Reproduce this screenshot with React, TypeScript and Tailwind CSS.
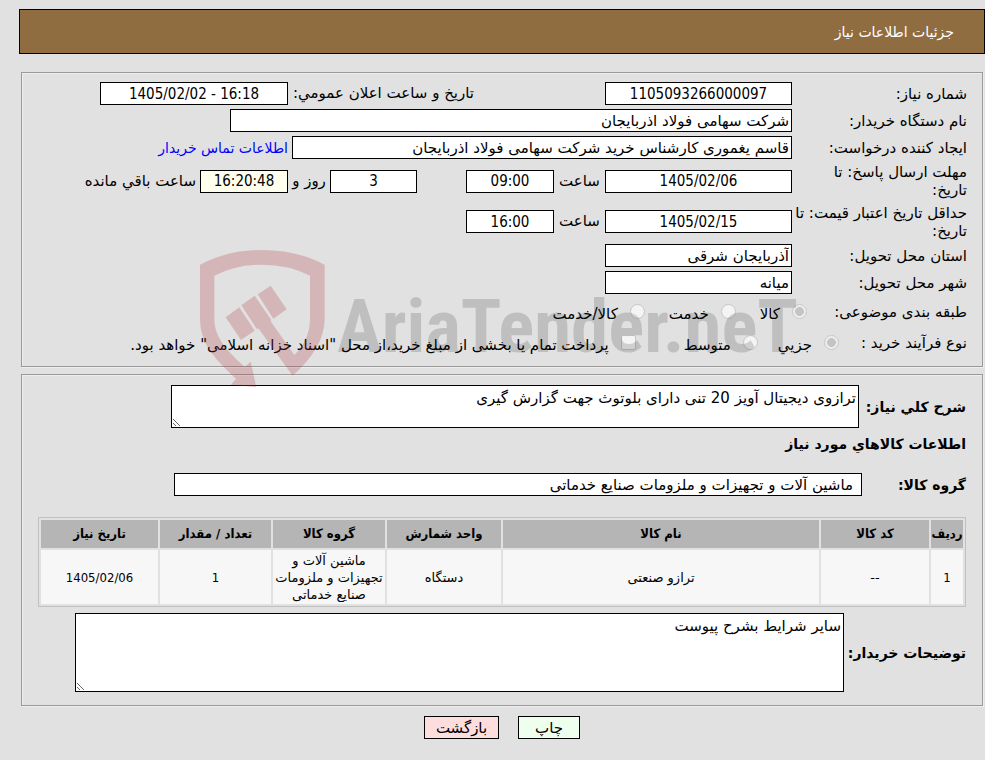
import type { InputHTMLAttributes, ReactNode } from "react";
import { clsx } from "clsx";

const columns = [
  { title: "ردیف", width: "w-8", value: "1" },
  { title: "کد کالا", width: "w-[108px]", value: "--" },
  { title: "نام کالا", width: "", value: "ترازو صنعتی" },
  { title: "واحد شمارش", width: "w-[114px]", value: "دستگاه" },
  { title: "گروه کالا", width: "w-28", value: "ماشین آلات و تجهیزات و ملزومات صنایع خدماتی" },
  { title: "تعداد / مقدار", width: "w-[111px]", value: "1" },
  { title: "تاریخ نیاز", width: "w-[117px]", value: "1405/02/06" },
];

const condensed = "font-['DejaVu_Sans_Condensed','DejaVu_Sans',sans-serif]";

function Box({
  className,
  numeric = false,
  tint = "bg-white",
  ...props
}: InputHTMLAttributes<HTMLInputElement> & { numeric?: boolean; tint?: string }) {
  return (
    <input
      readOnly
      className={clsx(
        "h-[23px] shrink-0 border border-black outline-none",
        tint,
        numeric && ["text-center", condensed],
        className
      )}
      {...props}
    />
  );
}

function Panel({ children, className }: { children: ReactNode; className?: string }) {
  return (
    <fieldset className={clsx("min-w-0 border border-[#9a9a9a] shadow-[1px_1px_0_#eeeeee,inset_1px_1px_0_#eeeeee]", className)}>
      {children}
    </fieldset>
  );
}

function Row({
  id,
  label,
  height = "h-[27px]",
  children,
}: {
  id: string;
  label: ReactNode;
  height?: string;
  children: ReactNode;
}) {
  return (
    <div className={clsx("flex items-center", height)}>
      <label htmlFor={id} className="w-[175px] shrink-0 leading-[18px] whitespace-nowrap">
        {label}
      </label>
      {children}
    </div>
  );
}

function Choice({
  id,
  name,
  label,
  checked = false,
  type = "radio",
}: {
  id: string;
  name: string;
  label: string;
  checked?: boolean;
  type?: "radio" | "checkbox";
}) {
  return (
    <span className="flex items-center gap-3 whitespace-nowrap">
      <input
        id={id}
        name={name}
        type={type}
        checked={checked}
        disabled
        readOnly
        className={clsx(
          "mb-0.5 size-[15px] shrink-0 appearance-none border border-[#c6c6c6] bg-[#f4f4f4]",
          type === "radio" ? "rounded-full" : "rounded-xs",
          checked && "bg-radial from-[#c4c4c4] from-45% to-[#eeeeee] to-50%"
        )}
      />
      <label htmlFor={id} className="pt-1">
        {label}
      </label>
    </span>
  );
}

function Watermark() {
  return (
    <div
      dir="ltr"
      aria-hidden="true"
      className="pointer-events-none absolute top-[250px] left-[200px] z-10 flex items-start"
    >
      <svg width="125" height="138" viewBox="60 60 375 414" fill="#b1363f" fillOpacity="0.25">
        <path d="M60 104Q143 60 247 60T434 104V265C434 325 402 380 338 437L235 295L231 298L184 226L224 197L274 270L272 274L343 375Q390 330 390 265V137Q325 104 247 104T103 137V265C103 320 135 357 194 411L212 395L229 472L152 464L168 447C96 380 60 335 60 265Z" />
        <path d="M137 262L178 232L224 302L183 330Z" />
        <path d="M233 193L272 167L320 238L280 266Z" />
      </svg>
      <span className="mt-8 ml-3 font-['Roboto_Condensed','Open_Sans_Condensed','Noto_Sans_Condensed','Liberation_Sans',sans-serif] text-[75px] leading-[88px] font-bold whitespace-nowrap text-black/15">
        AriaTender.neT
      </span>
    </div>
  );
}

export default function App() {
  return (
    <div
      dir="rtl"
      lang="fa"
      className="relative min-h-screen bg-[#e1e1e1] pt-[9px] pl-[19px] font-['DejaVu_Sans',sans-serif] text-[15px] text-black"
    >
      <h1 className="flex h-[45px] items-center border border-black bg-[#8f6d40] px-[30px] text-sm text-white">
        جزئیات اطلاعات نیاز
      </h1>

      <div className="pr-0.5 pl-0.5">
        <Panel className="mt-[18px] px-[15px] pt-[7px] pb-2">
          <Row id="number" label="شماره نیاز:">
            <Box id="number" numeric className="w-[187px]" defaultValue="1105093266000097" />
            <label htmlFor="announced" className="mr-[131px] w-[186px] shrink-0 whitespace-nowrap">
              تاریخ و ساعت اعلان عمومي:
            </label>
            <Box id="announced" numeric dir="ltr" className="w-[188px]" defaultValue="1405/02/02 - 16:18" />
          </Row>
          <Row id="buyer" label="نام دستگاه خریدار:">
            <Box id="buyer" className="w-[562px] px-0.5" defaultValue="شرکت سهامی فولاد اذربایجان" />
          </Row>
          <Row id="creator" label="ایجاد کننده درخواست:">
            <Box
              id="creator"
              className="w-[500px] px-0.5"
              defaultValue="قاسم یغموری کارشناس خرید شرکت سهامی فولاد اذربایجان"
            />
            <a href="#contact" className="mr-1 text-sm whitespace-nowrap text-[#0000ff]">
              اطلاعات تماس خریدار
            </a>
          </Row>
          <Row
            id="reply-date"
            height="h-10"
            label={
              <>
                مهلت ارسال پاسخ: تا
                <br />
                تاریخ:
              </>
            }
          >
            <Box id="reply-date" numeric className="w-[187px]" defaultValue="1405/02/06" />
            <label htmlFor="reply-time" className="w-[51px] shrink-0 text-center">
              ساعت
            </label>
            <Box id="reply-time" numeric className="w-[88px]" defaultValue="09:00" />
            <Box id="days" numeric className="mr-[49px] w-[87px]" defaultValue="3" />
            <label htmlFor="days" className="w-[42px] shrink-0 text-center whitespace-nowrap">
              روز و
            </label>
            <Box id="remaining" numeric tint="bg-[#ffffee]" className="w-[88px]" defaultValue="16:20:48" />
            <label htmlFor="remaining" className="mr-1 whitespace-nowrap">
              ساعت باقي مانده
            </label>
          </Row>
          <Row
            id="price-date"
            height="h-[41px]"
            label={
              <>
                حداقل تاریخ اعتبار قیمت: تا
                <br />
                تاریخ:
              </>
            }
          >
            <Box id="price-date" numeric className="w-[187px]" defaultValue="1405/02/15" />
            <label htmlFor="price-time" className="w-[51px] shrink-0 text-center">
              ساعت
            </label>
            <Box id="price-time" numeric className="w-[88px]" defaultValue="16:00" />
          </Row>
          <Row id="province" label="استان محل تحویل:">
            <Box id="province" className="w-[187px] px-0.5" defaultValue="آذربایجان شرقی" />
          </Row>
          <Row id="city" label="شهر محل تحویل:">
            <Box id="city" className="w-[187px] px-0.5" defaultValue="میانه" />
          </Row>
          <div role="radiogroup" aria-labelledby="category" className="flex h-8 items-center">
            <span id="category" className="w-40 whitespace-nowrap">
              طبقه بندی موضوعی:
            </span>
            <span className="flex gap-6">
              <Choice id="goods" name="category" label="کالا" checked />
              <Choice id="service" name="category" label="خدمت" />
              <Choice id="both" name="category" label="کالا/خدمت" />
            </span>
          </div>
          <div role="radiogroup" aria-labelledby="process" className="flex h-[30px] items-center">
            <span id="process" className="w-32 whitespace-nowrap">
              نوع فرآیند خرید :
            </span>
            <span className="flex">
              <Choice id="small" name="process" label="جزیي" checked />
              <span className="mr-5">
                <Choice id="medium" name="process" label="متوسط" />
              </span>
              <span className="mr-12">
                <Choice
                  id="treasury"
                  name="treasury"
                  type="checkbox"
                  label={'پرداخت تمام یا بخشی از مبلغ خرید،از محل "اسناد خزانه اسلامی" خواهد بود.'}
                />
              </span>
            </span>
          </div>
        </Panel>

        <Panel className="mt-[7px] pt-2.5 pr-4 pb-[13px] pl-4">
          <div className="flex items-center">
            <label htmlFor="summary" className="w-[107px] shrink-0 text-sm font-bold whitespace-nowrap">
              شرح كلي نیاز:
            </label>
            <textarea
              id="summary"
              readOnly
              className="ml-[133px] h-[43px] flex-1 resize border border-black bg-white px-0.5 py-px outline-none"
              defaultValue="ترازوی دیجیتال آویز 20 تنی دارای بلوتوث جهت گزارش گیری"
            />
          </div>
          <h2 className="flex h-8 items-center text-sm font-bold">اطلاعات کالاهاي مورد نیاز</h2>
          <div className="mt-[13px] flex items-center">
            <label htmlFor="group" className="w-[104px] shrink-0 text-sm font-bold">
              گروه کالا:
            </label>
            <Box
              id="group"
              className="ml-[136px] min-w-0 flex-1 px-2"
              defaultValue="ماشین آلات و تجهیزات و ملزومات صنایع خدماتی"
            />
          </div>
          <table className="mt-[21px] w-full table-fixed border-separate border-spacing-0.5 border border-[#c0c0c0] text-center text-[13px]">
            <thead className={condensed}>
              <tr className="h-7 bg-[#b5b5b5]">
                {columns.map((col) => (
                  <th key={col.title} scope="col" className={clsx("p-0 whitespace-nowrap", col.width)}>
                    {col.title}
                  </th>
                ))}
              </tr>
            </thead>
            <tbody>
              <tr className="h-[54px] bg-[#f7f7f7]">
                {columns.map((col) => (
                  <td key={col.title} className={clsx("p-0 leading-[17px]", /^\d/.test(col.value) && condensed)}>
                    {col.value}
                  </td>
                ))}
              </tr>
            </tbody>
          </table>
          <div className="mt-1.5 flex items-center">
            <label htmlFor="notes" className="w-[122px] shrink-0 text-sm font-bold whitespace-nowrap">
              توضیحات خریدار:
            </label>
            <textarea
              id="notes"
              readOnly
              className="ml-[37px] h-[79px] flex-1 resize border border-black bg-white px-0.5 py-px outline-none"
              defaultValue="سایر شرایط بشرح پیوست"
            />
          </div>
        </Panel>

        <div className="mt-[10px] flex justify-center gap-[19px]">
          <button type="button" className="h-[23px] w-[62px] border border-black bg-[#eeffee] leading-5">
            چاپ
          </button>
          <button type="button" className="h-[23px] w-[75px] border border-black bg-[#ffdddd] leading-5">
            بازگشت
          </button>
        </div>
      </div>

      <Watermark />
    </div>
  );
}
